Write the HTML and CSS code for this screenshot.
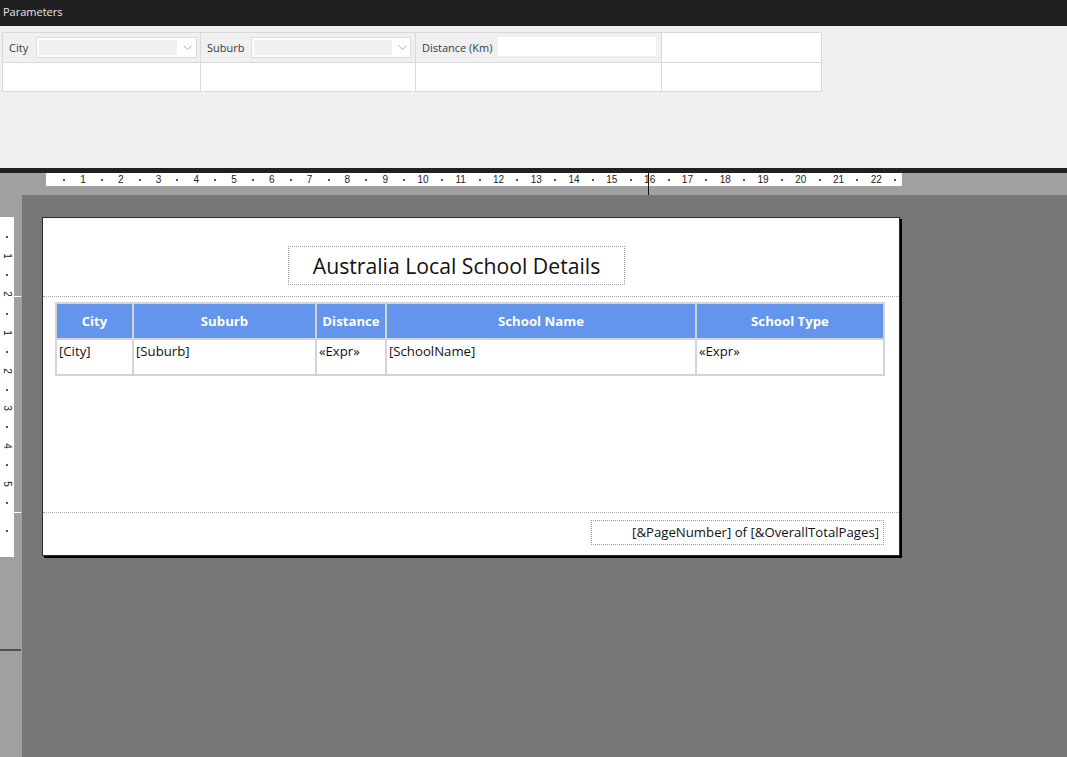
FILE: index.html
```html
<!DOCTYPE html>
<html>
<head>
<meta charset="utf-8">
<link rel="stylesheet" href="styles.css">
</head>
<body>
<div class="titlebar">Parameters</div>
<div class="params">
  <div class="pgrid">
    <div class="pcell gray">
      <span class="plabel">City</span>
      <div class="dropdown"><div class="dd-field"></div><svg class="chev" width="9" height="6" viewBox="0 0 9 6"><path d="M0.5 0.5 L4.5 4.5 L8.5 0.5" fill="none" stroke="#b8b8b8" stroke-width="1"/></svg></div>
    </div>
    <div class="pcell gray">
      <span class="plabel">Suburb</span>
      <div class="dropdown"><div class="dd-field"></div><svg class="chev" width="9" height="6" viewBox="0 0 9 6"><path d="M0.5 0.5 L4.5 4.5 L8.5 0.5" fill="none" stroke="#b8b8b8" stroke-width="1"/></svg></div>
    </div>
    <div class="pcell gray">
      <span class="plabel">Distance (Km)</span>
      <div class="tinput"></div>
    </div>
    <div class="pcell"></div>
    <div class="pcell"></div>
    <div class="pcell"></div>
    <div class="pcell"></div>
    <div class="pcell"></div>
  </div>
</div>
<div class="divider"></div>
<div class="workspace">
  <div class="rulerbar">
    <div class="hruler">
      <span class="t"><i class="dot"></i></span><span class="t">1</span>
      <span class="t"><i class="dot"></i></span><span class="t">2</span>
      <span class="t"><i class="dot"></i></span><span class="t">3</span>
      <span class="t"><i class="dot"></i></span><span class="t">4</span>
      <span class="t"><i class="dot"></i></span><span class="t">5</span>
      <span class="t"><i class="dot"></i></span><span class="t">6</span>
      <span class="t"><i class="dot"></i></span><span class="t">7</span>
      <span class="t"><i class="dot"></i></span><span class="t">8</span>
      <span class="t"><i class="dot"></i></span><span class="t">9</span>
      <span class="t"><i class="dot"></i></span><span class="t">10</span>
      <span class="t"><i class="dot"></i></span><span class="t">11</span>
      <span class="t"><i class="dot"></i></span><span class="t">12</span>
      <span class="t"><i class="dot"></i></span><span class="t">13</span>
      <span class="t"><i class="dot"></i></span><span class="t">14</span>
      <span class="t"><i class="dot"></i></span><span class="t">15</span>
      <span class="t"><i class="dot"></i></span><span class="t">16</span>
      <span class="t"><i class="dot"></i></span><span class="t">17</span>
      <span class="t"><i class="dot"></i></span><span class="t">18</span>
      <span class="t"><i class="dot"></i></span><span class="t">19</span>
      <span class="t"><i class="dot"></i></span><span class="t">20</span>
      <span class="t"><i class="dot"></i></span><span class="t">21</span>
      <span class="t"><i class="dot"></i></span><span class="t">22</span>
      <span class="t"><i class="dot"></i></span>
    </div>
    <div class="cursor"></div>
  </div>
  <div class="main">
    <div class="leftcol">
      <div class="vruler">
        <div class="vsec vhead">
          <span class="v"><i class="dot"></i></span><span class="v"><b>1</b></span>
          <span class="v"><i class="dot"></i></span><span class="v"><b>2</b></span>
        </div>
        <div class="vsep"></div>
        <div class="vsec vbody">
          <span class="v"><i class="dot"></i></span><span class="v"><b>1</b></span>
          <span class="v"><i class="dot"></i></span><span class="v"><b>2</b></span>
          <span class="v"><i class="dot"></i></span><span class="v"><b>3</b></span>
          <span class="v"><i class="dot"></i></span><span class="v"><b>4</b></span>
          <span class="v"><i class="dot"></i></span><span class="v"><b>5</b></span>
          <span class="v"><i class="dot"></i></span>
        </div>
        <div class="vsep"></div>
        <div class="vsec vfoot">
          <span class="v"><i class="dot"></i></span>
        </div>
      </div>
      <div class="scrollmark"></div>
    </div>
    <div class="canvas">
      <div class="page">
        <div class="rhead">
          <div class="titlebox">Australia Local School Details</div>
        </div>
        <div class="rbody">
          <table class="tbl">
            <colgroup>
              <col class="c1"><col class="c2"><col class="c3"><col class="c4"><col class="c5">
            </colgroup>
            <tr class="hdr">
              <th>City</th><th>Suburb</th><th>Distance</th><th>School Name</th><th>School Type</th>
            </tr>
            <tr class="row">
              <td>[City]</td><td>[Suburb]</td><td>«Expr»</td><td>[SchoolName]</td><td>«Expr»</td>
            </tr>
          </table>
        </div>
        <div class="rfoot">
          <div class="pagebox">[&amp;PageNumber] of [&amp;OverallTotalPages]</div>
        </div>
      </div>
    </div>
  </div>
</div>
</body>
</html>
```
FILE: styles.css
```css
* { box-sizing: border-box; }
html, body { margin: 0; padding: 0; }
body {
  width: 1067px;
  height: 757px;
  overflow: hidden;
  background: #767676;
  font-family: "Open Sans", "Noto Sans", sans-serif;
}
.titlebar {
  height: 26px;
  background: #202020;
  color: #e8e8e8;
  font-size: 11px;
  line-height: 24px;
  padding-left: 3px;
}
.params {
  height: 142px;
  background: #f0f0f0;
  padding: 6px 0 0 2px;
}
.pgrid {
  display: grid;
  grid-template-columns: 198px 215px 246px 160px;
  grid-template-rows: 30px 29px;
  width: 819px;
  border-top: 1px solid #d9d9d9;
  border-left: 1px solid #d9d9d9;
}
.pcell {
  background: #fff;
  border-right: 1px solid #d9d9d9;
  border-bottom: 1px solid #d9d9d9;
  display: flex;
  align-items: center;
}
.pcell.gray { background: #f0f0f0; }
.plabel {
  font-size: 11px;
  color: #3a3a3a;
  padding-left: 6px;
  white-space: nowrap;
}
.dropdown {
  height: 21px;
  margin-left: 8px;
  flex: 0 0 161px;
  background: #fff;
  border: 1px solid #dcdcdc;
  display: flex;
  align-items: center;
  padding: 2px;
}
.pcell:nth-child(2) .dropdown { margin-left: 7px; flex-basis: 160px; }
.dd-field {
  height: 100%;
  width: 138px;
  background: #f0f0f0;
}
.chev { margin-left: 6px; }
.tinput {
  margin-left: 5px;
  width: 158px;
  height: 19px;
  background: #fff;
  margin-top: -2px;
}
.divider {
  height: 5px;
  background: #202020;
}
.workspace { position: relative; }
.rulerbar {
  height: 22px;
  background: #a0a0a0;
  padding-left: 46px;
}
.hruler {
  width: 856px;
  height: 13px;
  background: #fff;
  display: flex;
  padding-left: 8.6px;
  font-family: "Liberation Sans", "DejaVu Sans", sans-serif;
  font-size: 10px;
  line-height: 13px;
  color: #222;
}
.t {
  flex: 0 0 18.9px;
  width: 18.9px;
  text-align: center;
  position: relative;
  white-space: nowrap;
  display: flex;
  justify-content: center;
  align-items: center;
}
.dot {
  display: block;
  width: 2px;
  height: 2px;
  background: #555;
}
.cursor {
  position: absolute;
  left: 648px;
  top: 0;
  width: 1px;
  height: 22px;
  background: #111;
}
.main {
  display: flex;
  height: 562px;
}
.leftcol {
  flex: 0 0 22px;
  background: #a0a0a0;
  padding-top: 22px;
}
.vruler {
  width: 14px;
  background: #fff;
}
.vsec {
  display: flex;
  flex-direction: column;
  overflow: hidden;
  font-family: "Liberation Sans", "DejaVu Sans", sans-serif;
  font-size: 10px;
  color: #222;
}
.vhead { height: 79px; padding-top: 10.5px; }
.vbody { height: 215px; padding-top: 7.5px; }
.vfoot { height: 44px; padding-top: 8.5px; }
.vsep {
  width: 21px;
  height: 1px;
  background: #fff;
}
.v {
  flex: 0 0 18.9px;
  display: flex;
  align-items: center;
  justify-content: center;
}
.v b {
  font-weight: normal;
  display: inline-block;
  transform: rotate(90deg);
  line-height: 10px;
}
.scrollmark {
  margin-top: 92px;
  width: 21px;
  height: 2px;
  background: #505050;
}
.canvas {
  flex: 1;
  background: #767676;
  padding: 22px 0 0 20px;
}
.page {
  width: 858px;
  height: 339px;
  background: #fff;
  border: 1px solid #2a2a2a;
  box-shadow: 2px 2px 0 #000;
  display: flex;
  flex-direction: column;
}
.rhead {
  height: 79px;
  border-bottom: 1px dotted #a8a8a8;
  padding: 28px 0 0 245px;
}
.titlebox {
  width: 337px;
  height: 39px;
  border: 1px dotted #9a9a9a;
  font-size: 21.2px;
  line-height: 37px;
  text-align: center;
  color: #111;
}
.rbody {
  height: 216px;
  border-bottom: 1px dotted #a8a8a8;
  padding: 5px 0 0 12px;
}
.tbl {
  border-collapse: collapse;
  table-layout: fixed;
  width: 828px;
  font-size: 13.2px;
}
.c1 { width: 77px; }
.c2 { width: 183px; }
.c3 { width: 70px; }
.c4 { width: 310px; }
.c5 { width: 188px; }
.tbl th, .tbl td {
  border: 2px solid #d4d4d4;
  overflow: hidden;
  white-space: nowrap;
}
.hdr th {
  height: 36px;
  background: #6495ed;
  color: #fff;
  font-weight: bold;
  text-align: center;
  padding: 0;
}
.row td {
  height: 36px;
  vertical-align: top;
  padding: 2px 2px 0 2px;
  color: #111;
}
.rfoot {
  flex: 1;
  padding: 7px 0 0 548px;
}
.pagebox {
  width: 293px;
  height: 25px;
  border: 1px dotted #9a9a9a;
  font-size: 13.2px;
  line-height: 23px;
  text-align: right;
  padding-right: 4px;
  color: #111;
}
```
